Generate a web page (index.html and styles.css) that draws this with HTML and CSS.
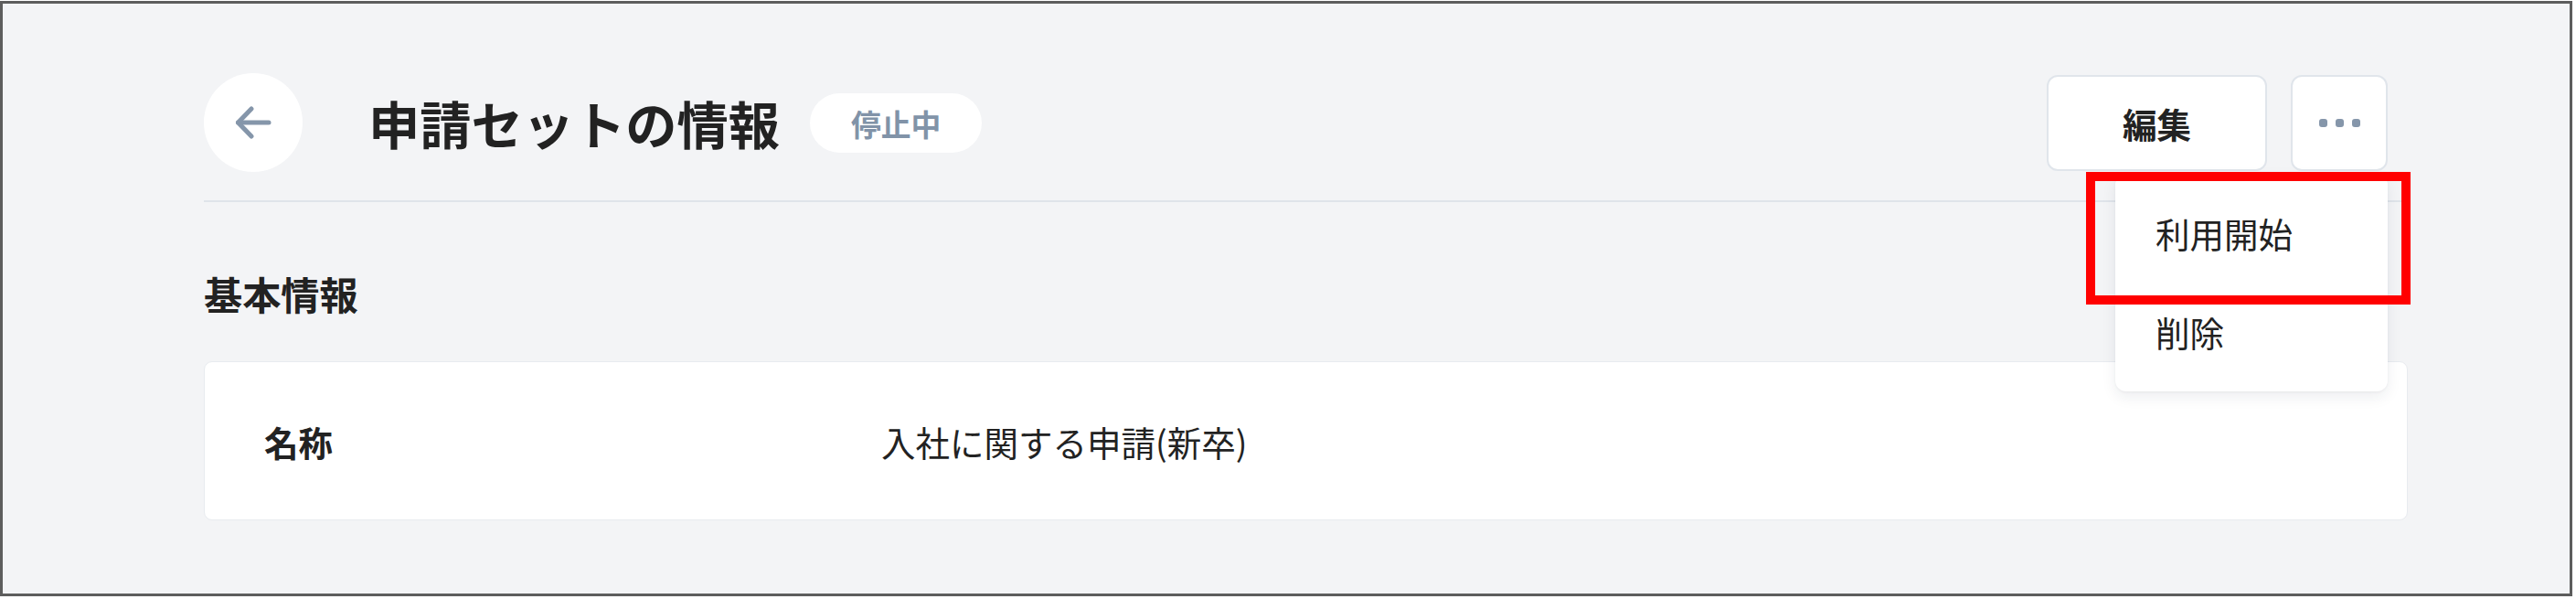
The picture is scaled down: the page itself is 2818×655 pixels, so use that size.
FILE: index.html
```html
<!DOCTYPE html>
<html lang="ja">
<head>
<meta charset="utf-8">
<title>申請セットの情報</title>
<link rel="stylesheet" href="styles.css">
</head>
<body>
<div class="frame">
  <div class="content">
    <header class="page-header">
      <button class="back-btn" aria-label="戻る">
        <svg width="40" height="36" viewBox="0 0 40 36" fill="none" stroke="currentColor" stroke-width="5" stroke-linecap="round" stroke-linejoin="round">
          <path d="M37 18H3.5"/>
          <path d="M18 3L3.5 18L18 33"/>
        </svg>
      </button>
      <h1 class="title">申請セットの情報</h1>
      <span class="badge">停止中</span>
      <div class="spacer"></div>
      <div class="actions">
        <button class="btn btn-edit">編集</button>
        <div class="more-wrap">
          <button class="btn btn-more" aria-label="その他">
            <span class="dot"></span><span class="dot"></span><span class="dot"></span>
          </button>
          <div class="menu">
            <div class="menu-item">利用開始</div>
            <div class="menu-item">削除</div>
            <div class="highlight"></div>
          </div>
        </div>
      </div>
    </header>
    <div class="divider"></div>
    <h2 class="section-title">基本情報</h2>
    <div class="card">
      <div class="row">
        <div class="label">名称</div>
        <div class="value">入社に関する申請(新卒)</div>
      </div>
    </div>
  </div>
</div>
</body>
</html>
```

FILE: styles.css
```css
* { box-sizing: border-box; }

html, body {
  margin: 0;
  padding: 0;
  background: #ffffff;
  font-family: "Noto Sans CJK JP", "Noto Sans", sans-serif;
  color: #222222;
}

.frame {
  margin-top: 1px;
  width: 2814px;
  height: 651px;
  border: 3px solid #5d5d5d;
  background: #f3f4f6;
  overflow: hidden;
}

.content {
  padding: 76px 177px 0 220px;
}

.page-header {
  display: flex;
  align-items: center;
  height: 108px;
}

.back-btn {
  width: 108px;
  height: 108px;
  border-radius: 50%;
  border: none;
  background: #ffffff;
  color: #8596aa;
  display: flex;
  align-items: center;
  justify-content: center;
  padding: 0 0 0 0;
  cursor: pointer;
}

.title {
  margin: 0 0 0 72px;
  font-size: 56.25px;
  line-height: 1;
  font-weight: 700;
  color: #222222;
}

.badge {
  margin-left: 33px;
  height: 65px;
  padding: 0 45px;
  border-radius: 999px;
  background: #ffffff;
  color: #8193a8;
  font-size: 32.8px;
  font-weight: 700;
  display: flex;
  align-items: center;
}

.spacer { flex: 1; }

.actions {
  display: flex;
  gap: 26px;
  margin-right: 22px;
}

.btn {
  height: 105px;
  background: #ffffff;
  border: 2px solid #e0e5eb;
  border-radius: 12px;
  font-family: inherit;
  cursor: pointer;
  display: flex;
  align-items: center;
  justify-content: center;
  padding: 0;
}

.btn-edit {
  width: 241px;
  font-size: 37.5px;
  font-weight: 700;
  color: #222222;
}

.btn-more {
  width: 106px;
  gap: 9px;
}

.dot {
  width: 9px;
  height: 9px;
  border-radius: 3px;
  background: #8596aa;
}

.more-wrap {
  position: relative;
}

.menu {
  position: absolute;
  top: 108px;
  right: 0;
  width: 298px;
  padding: 11px 0;
  background: #ffffff;
  border-radius: 12px;
  box-shadow: 0 6px 16px rgba(30, 40, 60, 0.08), 0 1px 3px rgba(30, 40, 60, 0.05);
  z-index: 10;
}

.menu-item {
  height: 108px;
  line-height: 108px;
  padding-left: 44px;
  font-size: 37.5px;
  font-weight: 400;
  color: #222222;
}

.highlight {
  position: absolute;
  top: -2px;
  left: -32px;
  width: 355px;
  height: 145px;
  border: 10px solid #ff0000;
  pointer-events: none;
}

.divider {
  margin-top: 31px;
  height: 2px;
  background: #dfe4ea;
}

.section-title {
  margin: 68px 0 0 0;
  font-size: 42.2px;
  line-height: 63px;
  font-weight: 700;
  color: #222222;
}

.card {
  margin-top: 43px;
  height: 174px;
  background: #ffffff;
  border: 1px solid #e8ebef;
  border-radius: 9px;
  padding: 0 65px;
  display: flex;
  align-items: center;
}

.row {
  display: flex;
  align-items: center;
}

.label {
  width: 675px;
  font-size: 37.5px;
  font-weight: 700;
  color: #222222;
}

.value {
  font-size: 37.5px;
  font-weight: 400;
  color: #222222;
}
```
